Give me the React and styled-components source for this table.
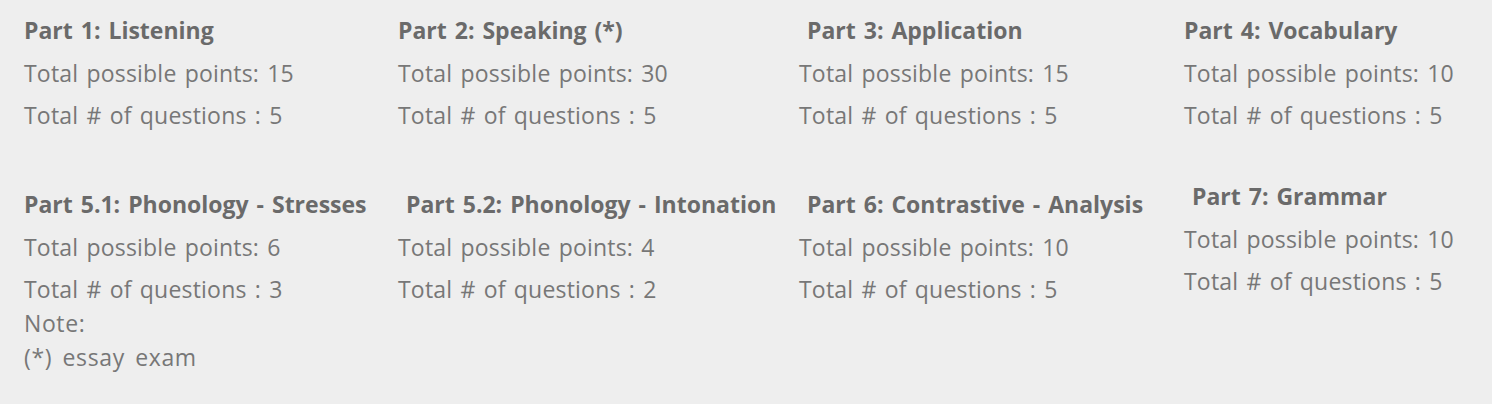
import React from "react";
import styled, { createGlobalStyle } from "styled-components";

const Global = createGlobalStyle`
  html, body { margin: 0; padding: 0; background: #eeeeee; }
  body { font-family: "Open Sans", "Liberation Sans", sans-serif; }
`;

const Page = styled.div`
  width: 1492px;
  height: 404px;
  box-sizing: border-box;
  padding: 15px 0 0 24px;
  background: #eeeeee;
  overflow: hidden;
`;

const Grid = styled.div`
  display: grid;
  grid-template-columns: 374px 401px 385px 1fr;
  row-gap: 59px;
`;

const Block = styled.div`
  display: flex;
  flex-direction: column;
  gap: 12.5px;
  margin-top: ${(p) => (p.$lift ? `-${p.$lift}px` : "0")};
`;

const Heading = styled.div`
  font-size: 23px;
  line-height: 30px;
  font-weight: 700;
  word-spacing: 2px;
  color: #6a6a6a;
  padding-left: ${(p) => p.$indent || 0}px;
  white-space: nowrap;
`;

const Line = styled.div`
  font-size: 23px;
  line-height: 30px;
  font-weight: 400;
  letter-spacing: 0.2px;
  word-spacing: 2px;
  color: #777777;
  white-space: nowrap;
`;

const Note = styled.div`
  margin-top: 2px;
  font-size: 23px;
  line-height: 34px;
  letter-spacing: 0.6px;
  word-spacing: 4px;
  color: #777777;
`;

const parts = [
  { title: "Part 1: Listening", points: 15, questions: 5 },
  { title: "Part 2: Speaking (*)", points: 30, questions: 5 },
  { title: "Part 3: Application", points: 15, questions: 5, indent: 8 },
  { title: "Part 4: Vocabulary", points: 10, questions: 5 },
  { title: "Part 5.1: Phonology - Stresses", points: 6, questions: 3 },
  { title: "Part 5.2: Phonology - Intonation", points: 4, questions: 2, indent: 8 },
  { title: "Part 6: Contrastive - Analysis", points: 10, questions: 5, indent: 8 },
  { title: "Part 7: Grammar", points: 10, questions: 5, indent: 8, lift: 8 },
];

export default function App() {
  return (
    <Page>
      <Global />
      <Grid>
        {parts.map((p) => (
          <Block key={p.title} $lift={p.lift}>
            <Heading $indent={p.indent}>{p.title}</Heading>
            <Line>Total possible points: {p.points}</Line>
            <Line>Total # of questions : {p.questions}</Line>
          </Block>
        ))}
      </Grid>
      <Note>
        Note:
        <br />
        (*) essay exam
      </Note>
    </Page>
  );
}
